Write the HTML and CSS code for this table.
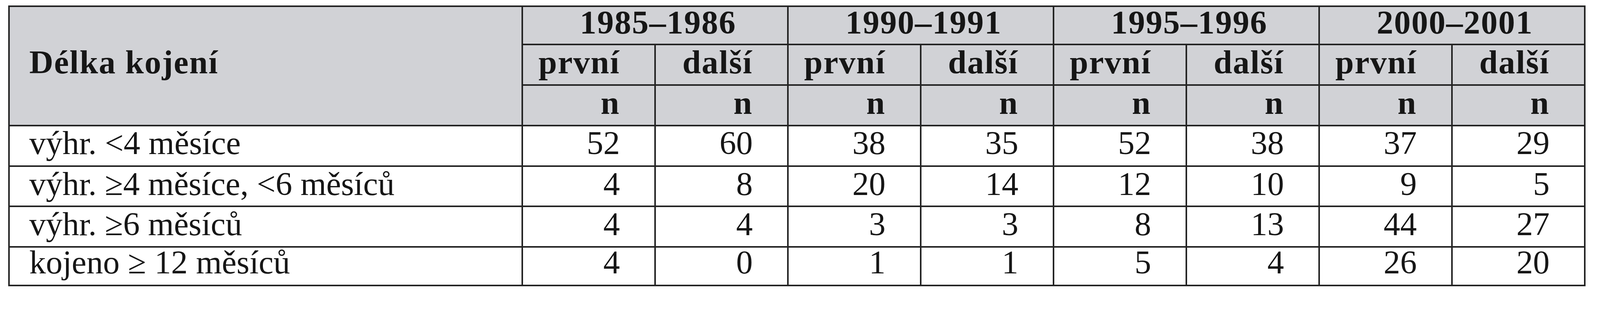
FILE: index.html
```html
<!DOCTYPE html>
<html lang="cs">
<head>
<meta charset="utf-8">
<title>Délka kojení</title>
<link rel="stylesheet" href="styles.css">
</head>
<body>
<table class="t">
  <colgroup>
    <col class="c-label">
    <col span="8">
  </colgroup>
  <thead>
    <tr class="r-year">
      <th class="label" rowspan="3">Délka kojení</th>
      <th class="year" colspan="2">1985–1986</th>
      <th class="year" colspan="2">1990–1991</th>
      <th class="year" colspan="2">1995–1996</th>
      <th class="year" colspan="2">2000–2001</th>
    </tr>
    <tr class="r-sub">
      <th class="num">první</th><th class="num">další</th>
      <th class="num">první</th><th class="num">další</th>
      <th class="num">první</th><th class="num">další</th>
      <th class="num">první</th><th class="num">další</th>
    </tr>
    <tr class="r-n">
      <th class="num">n</th><th class="num">n</th>
      <th class="num">n</th><th class="num">n</th>
      <th class="num">n</th><th class="num">n</th>
      <th class="num">n</th><th class="num">n</th>
    </tr>
  </thead>
  <tbody>
    <tr class="r-d1">
      <td class="label">výhr. &lt;4 měsíce</td>
      <td class="num">52</td><td class="num">60</td>
      <td class="num">38</td><td class="num">35</td>
      <td class="num">52</td><td class="num">38</td>
      <td class="num">37</td><td class="num">29</td>
    </tr>
    <tr class="r-d2">
      <td class="label">výhr. ≥4 měsíce, &lt;6 měsíců</td>
      <td class="num">4</td><td class="num">8</td>
      <td class="num">20</td><td class="num">14</td>
      <td class="num">12</td><td class="num">10</td>
      <td class="num">9</td><td class="num">5</td>
    </tr>
    <tr class="r-d3">
      <td class="label">výhr. ≥6 měsíců</td>
      <td class="num">4</td><td class="num">4</td>
      <td class="num">3</td><td class="num">3</td>
      <td class="num">8</td><td class="num">13</td>
      <td class="num">44</td><td class="num">27</td>
    </tr>
    <tr class="r-last">
      <td class="label">kojeno ≥ 12 měsíců</td>
      <td class="num">4</td><td class="num">0</td>
      <td class="num">1</td><td class="num">1</td>
      <td class="num">5</td><td class="num">4</td>
      <td class="num">26</td><td class="num">20</td>
    </tr>
  </tbody>
</table>
</body>
</html>
```

FILE: styles.css
```css
html, body {
  margin: 0;
  padding: 0;
  background: #ffffff;
  font-family: "Liberation Serif", serif;
}

.t {
  border-collapse: collapse;
  table-layout: fixed;
  width: 4038px;
  margin: 14px 0 0 21px;
  font-family: "Liberation Serif", serif;
  font-size: 85px;
  color: #161616;
}

.c-label {
  width: 1314px;
}

.t th,
.t td {
  font-family: "Liberation Serif", serif;
  font-size: 85px;
  border: 4px solid #232323;
  padding: 0 88px 0 0;
  vertical-align: top;
  white-space: nowrap;
  line-height: 86px;
}

.t thead th {
  background: #d1d2d6;
  font-weight: bold;
  letter-spacing: 2px;
}

.t td {
  font-weight: normal;
}

.t .label {
  text-align: left;
  padding-left: 50px;
}

.t th.label {
  padding-top: 98px;
}

.num {
  text-align: right;
}

.t th.year {
  text-align: center;
  padding: 0 0 0 15px;
  line-height: 78px;
}

.r-year {
  height: 98px;
}

.r-sub,
.r-n,
.r-d1,
.r-d3 {
  height: 104px;
}

.r-d2 {
  height: 103px;
}

.r-d1 td {
  line-height: 84px;
}

.r-last {
  height: 99px;
}

.r-last td {
  line-height: 74px;
}
```
